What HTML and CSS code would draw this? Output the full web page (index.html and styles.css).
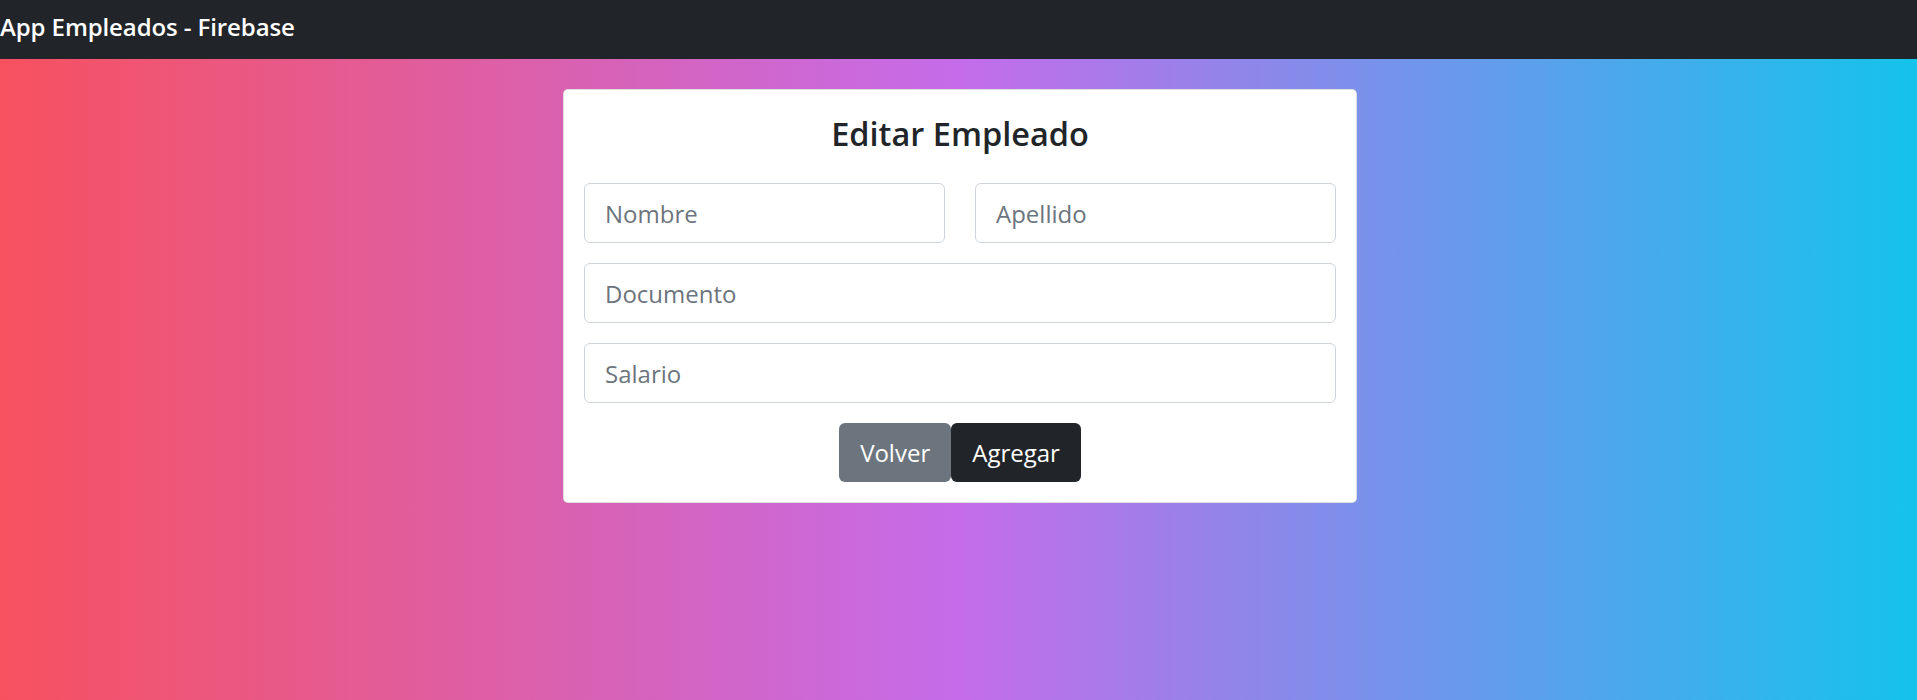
FILE: index.html
```html
<!DOCTYPE html>
<html lang="es">
<head>
<meta charset="utf-8">
<title>App Empleados - Firebase</title>
<link rel="stylesheet" href="styles.css">
</head>
<body>
<nav class="navbar"><span class="brand">App Empleados - Firebase</span></nav>
<main class="page">
  <div class="card">
    <h3 class="title">Editar Empleado</h3>
    <form class="form">
      <div class="row">
        <input class="input" type="text" placeholder="Nombre">
        <input class="input" type="text" placeholder="Apellido">
      </div>
      <input class="input" type="text" placeholder="Documento">
      <input class="input" type="text" placeholder="Salario">
      <div class="actions"><button type="button" class="btn btn-secondary">Volver</button><button type="submit" class="btn btn-dark">Agregar</button></div>
    </form>
  </div>
</main>
</body>
</html>
```
FILE: styles.css
```css
* { box-sizing: border-box; }
html, body { margin: 0; height: 100%; }
body {
  font-family: "Open Sans", "Noto Sans", "Liberation Sans", sans-serif;
  color: #212529;
  background: linear-gradient(to right, #f7515f 0%, #c56cea 50%, #14c3ea 100%);
  min-height: 700px;
}
.navbar {
  height: 59px;
  padding-bottom: 5px;
  background: #212529;
  display: flex;
  align-items: center;
}
.brand {
  color: #fff;
  font-size: 24px;
  font-weight: 600;
  line-height: 1;
  letter-spacing: -0.1px;
}
.page {
  display: flex;
  justify-content: center;
  padding-top: 30px;
  padding-left: 3px;
}
.card {
  width: 794px;
  background: #fff;
  border: 1px solid rgba(0,0,0,.125);
  border-radius: 5px;
  padding: 20px;
}
.title {
  margin: 4px 0 30px;
  text-align: center;
  font-size: 32.5px;
  font-weight: 600;
  line-height: 1.2;
}
.form {
  display: flex;
  flex-direction: column;
  gap: 20px;
}
.row {
  display: flex;
  gap: 30px;
}
.input {
  width: 100%;
  height: 60px;
  padding: 10px 20px;
  font-family: inherit;
  font-size: 24px;
  color: #495057;
  border: 1px solid #ced4da;
  border-radius: 6px;
  background: #fff;
}
.input::placeholder { color: #6c757d; }
.actions {
  display: flex;
  justify-content: center;
}
.btn {
  height: 59px;
  padding: 0 20px;
  font-family: inherit;
  font-size: 24px;
  color: #fff;
  border: 1px solid transparent;
  border-radius: 6px;
}
.btn-secondary { background: #6c757d; }
.btn-dark { background: #212529; }
```
